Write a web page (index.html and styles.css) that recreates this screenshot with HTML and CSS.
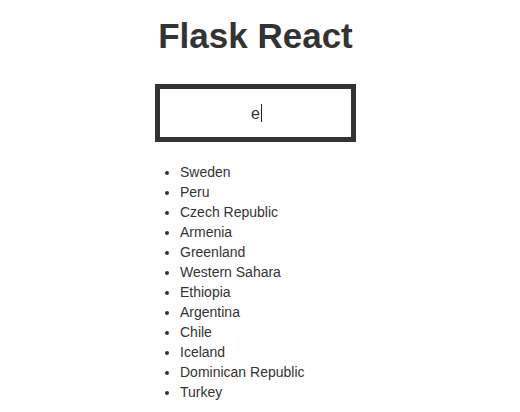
FILE: index.html
```html
<!DOCTYPE html>
<html lang="en">
<head>
<meta charset="utf-8">
<title>Flask React</title>
<link rel="stylesheet" href="styles.css">
</head>
<body>
<main class="app">
  <h1 class="title">Flask React</h1>
  <div class="search-box">
    <input class="search" type="text" value="e" aria-label="Search countries" autofocus>
    <span class="caret" aria-hidden="true"></span>
  </div>
  <ul class="countries">
    <li>Sweden</li>
    <li>Peru</li>
    <li>Czech Republic</li>
    <li>Armenia</li>
    <li>Greenland</li>
    <li>Western Sahara</li>
    <li>Ethiopia</li>
    <li>Argentina</li>
    <li>Chile</li>
    <li>Iceland</li>
    <li>Dominican Republic</li>
    <li>Turkey</li>
  </ul>
</main>
</body>
</html>
```
FILE: styles.css
```css
* {
  box-sizing: border-box;
}

body {
  margin: 0;
  background: #fff;
  color: #333;
  font: 14px/20px "Helvetica Neue", Helvetica, "Liberation Sans", Arial, sans-serif;
}

.app {
  display: grid;
  grid-template-columns: 201px;
  justify-content: center;
  padding: 16px 9px 0 0;
}

.title {
  margin: 0 0 28px;
  font-size: 35px;
  line-height: 40px;
  text-align: center;
  white-space: nowrap;
}

.search-box {
  position: relative;
  display: flex;
}

.search {
  width: 100%;
  height: 58px;
  padding: 10px 8px 8px;
  border: 5px solid #333;
  border-radius: 0;
  outline: none;
  color: #333;
  caret-color: transparent;
  font: inherit;
  font-size: 16px;
  text-align: center;
}

/* Text cursor after the typed letter */
.caret {
  position: absolute;
  top: 20px;
  left: 50%;
  width: 1px;
  height: 18px;
  margin-left: 5px;
  background: #222;
}

.countries {
  margin: 20px 0 0;
  padding-left: 25px;
  white-space: nowrap;
}
```
